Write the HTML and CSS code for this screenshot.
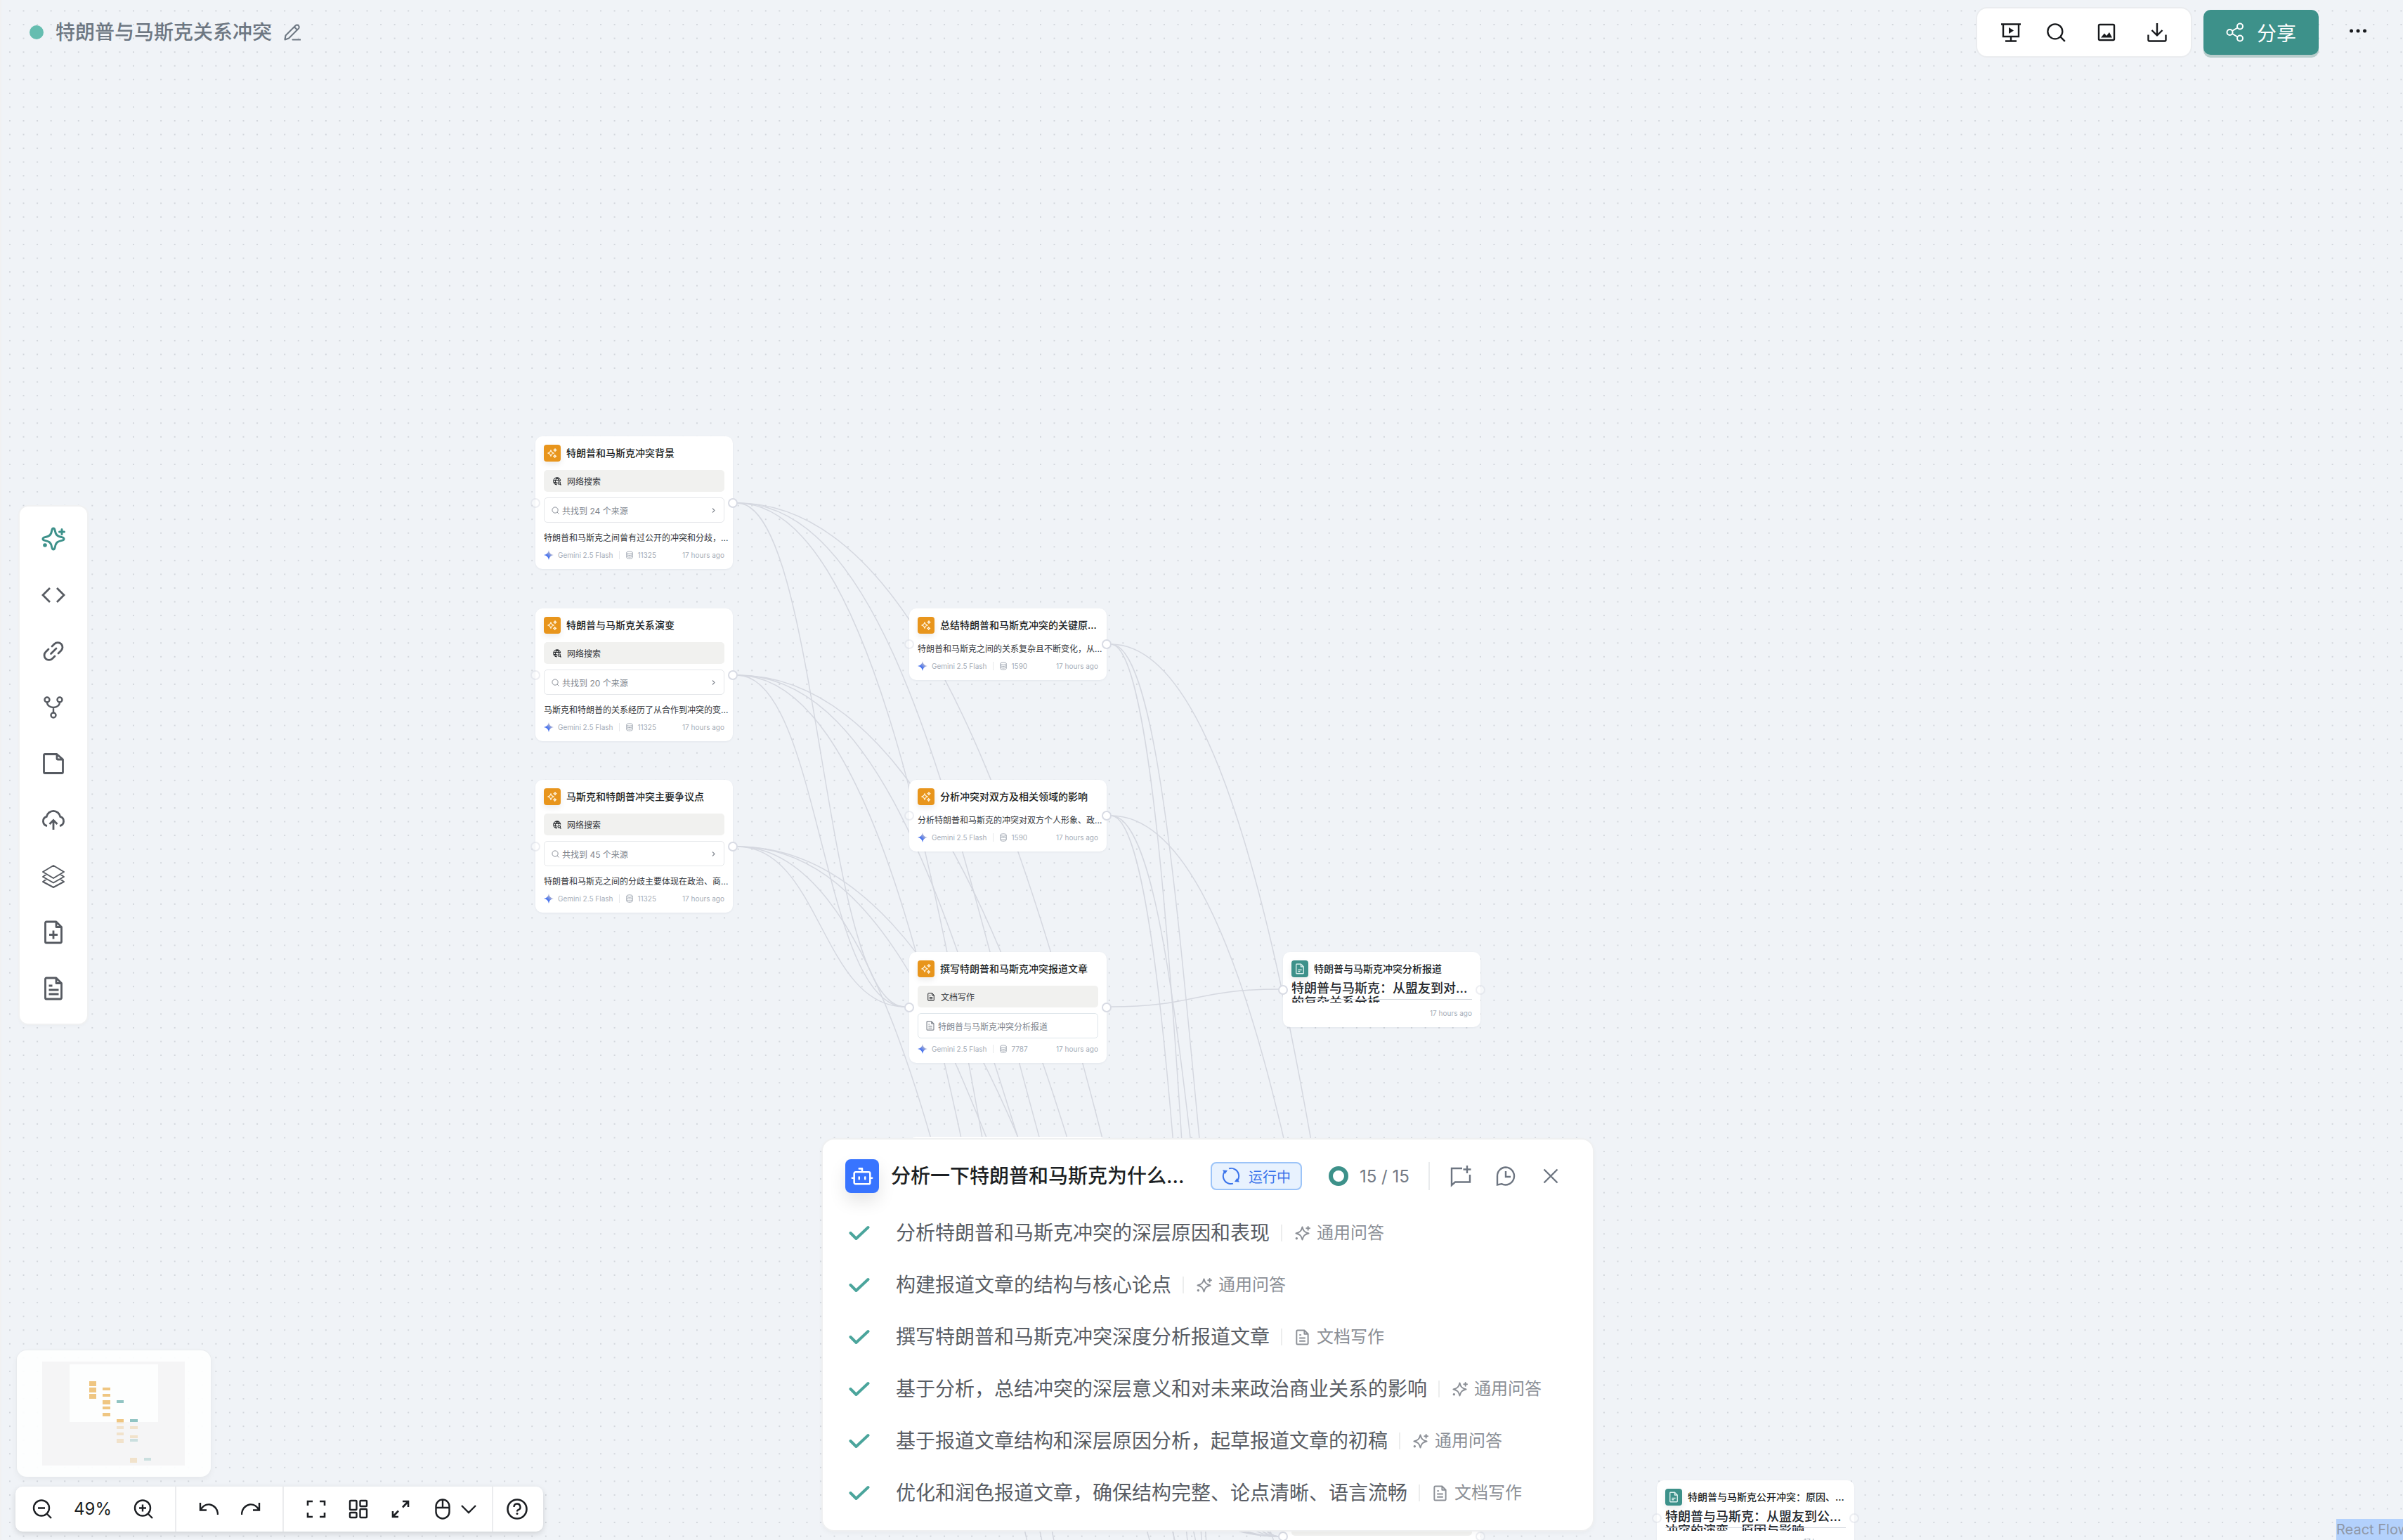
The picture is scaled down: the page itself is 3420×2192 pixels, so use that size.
FILE: index.html
```html
<!DOCTYPE html>
<html lang="zh-CN">
<head>
<meta charset="utf-8">
<title>特朗普与马斯克关系冲突</title>
<link rel="stylesheet" href="styles.css">
</head>
<body>
<svg class="sprite" aria-hidden="true">
  <defs>
    <linearGradient id="gem" x1="0" y1="1" x2="1" y2="0">
      <stop offset="0.35" stop-color="#3f6df0"/><stop offset="0.6" stop-color="#8ea0dc"/><stop offset="0.8" stop-color="#e3d3cf"/>
    </linearGradient>
  </defs>
  <symbol id="i-gemini" viewBox="0 0 24 24"><path fill="url(#gem)" d="M12 0c1 7 5 11 12 12-7 1-11 5-12 12C11 17 7 13 0 12 7 11 11 7 12 0z"/></symbol>
  <symbol id="i-stars" viewBox="0 0 24 24"><g fill="none" stroke="currentColor" stroke-width="1.8" stroke-linejoin="round"><path d="M9 5.500c.9 4.200 2.300 5.600 6.500 6.500-4.200.9-5.600 2.300-6.500 6.500C8.100 14.300 6.700 12.900 2.500 12 6.700 11.100 8.100 9.700 9 5.500z"/><path d="M18 2.500c.4 2 1 2.600 3 3-2 .4-2.600 1-3 3-.4-2-1-2.600-3-3 2-.4 2.600-1 3-3zM17.500 15.500c.4 2 1 2.600 3 3-2 .4-2.600 1-3 3-.4-2-1-2.600-3-3 2-.4 2.600-1 3-3z"/></g></symbol>
  <symbol id="i-spark" viewBox="0 0 24 24"><path fill="none" stroke="currentColor" stroke-width="2" stroke-linejoin="round" d="M12 2.500c1.500 6 3.500 8 9.500 9.500-6 1.500-8 3.500-9.500 9.500-1.500-6-3.500-8-9.500-9.500C8.500 10.500 10.500 8.500 12 2.500z"/><path stroke="currentColor" stroke-width="2" stroke-linecap="round" d="M20.500 2v5M18 4.500h5"/><circle cx="3.500" cy="19.500" r="1.800" fill="currentColor"/></symbol>
  <symbol id="i-globe" viewBox="0 0 24 24"><g fill="none" stroke="currentColor" stroke-width="2.200"><path d="M21.500 11A10 10 0 1 0 11 21.800M2 9h19M2 15h9M12 2C6 8 6 16 10.500 21.500M12 2c3 3 4 6 4 9"/><circle cx="17.500" cy="17" r="3.500"/><path d="M20 20l3 3"/></g></symbol>
  <symbol id="i-search" viewBox="0 0 24 24"><circle cx="11" cy="11" r="9" fill="none" stroke="currentColor" stroke-width="2"/><path stroke="currentColor" stroke-width="2" d="M17.500 17.500L23 23"/></symbol>
  <symbol id="i-right" viewBox="0 0 24 24"><path fill="none" stroke="currentColor" stroke-width="3" d="M8 4l8 8-8 8"/></symbol>
  <symbol id="i-db" viewBox="0 0 20 24"><g fill="none" stroke="currentColor" stroke-width="2"><ellipse cx="10" cy="5" rx="8.500" ry="3.500"/><path d="M1.500 5v14c0 2 4 3.500 8.500 3.500s8.500-1.500 8.500-3.500V5M1.500 10c0 2 4 3 8.500 3s8.500-1 8.500-3M1.500 15c0 2 4 3 8.500 3s8.500-1 8.500-3"/></g></symbol>
  <symbol id="i-doc" viewBox="0 0 24 24"><g fill="none" stroke="currentColor" stroke-width="2" stroke-linejoin="round"><path d="M15 1.500H5A1.500 1.500 0 0 0 3.500 3v18A1.500 1.500 0 0 0 5 22.500h14a1.500 1.500 0 0 0 1.500-1.500V7zM15 1.500V7h5.500M7.500 8.500h3M7.500 13h9M7.500 17.500h9"/></g></symbol>
  <symbol id="i-page" viewBox="0 0 24 24"><g fill="none" stroke="currentColor" stroke-width="1.800" stroke-linejoin="round"><path d="M14 3H6a1 1 0 0 0-1 1v16a1 1 0 0 0 1 1h12a1 1 0 0 0 1-1V8zM14 3v5h5M8.500 14h7M8.500 17h4"/></g></symbol>
  <symbol id="i-check" viewBox="0 0 30 22"><path fill="none" stroke="currentColor" stroke-width="4" stroke-linecap="round" stroke-linejoin="round" d="M2.500 11l8 8L27.500 3"/></symbol>
</svg>

<main class="app">
  <svg class="grid" aria-hidden="true">
    <defs><pattern id="dots" x="4.200" y="5.700" width="19.560" height="19.560" patternUnits="userSpaceOnUse"><circle cx="9.780" cy="9.780" r="0.700" fill="#a3a8b0"/></pattern></defs>
    <rect width="100%" height="100%" fill="url(#dots)"/>
  </svg>

  <section class="canvas" aria-label="画布">
    <svg class="edges" aria-hidden="true">
      <path d="M1049 716C1168 716 1169 1433 1288 1433"/>
      <path d="M1049 716C1435 716 1434 2187 1820 2187"/>
      <path d="M1049 716C1435 716 1434 2939 1820 2939"/>
      <path d="M1049 716C1700 716 1700 3656 2352 3656"/>
      <path d="M1049 961C1168 961 1169 1433 1288 1433"/>
      <path d="M1049 961C1435 961 1434 2187 1820 2187"/>
      <path d="M1049 961C1435 961 1434 2939 1820 2939"/>
      <path d="M1049 961C1700 961 1700 3656 2352 3656"/>
      <path d="M1049 1205C1168 1205 1169 1433 1288 1433"/>
      <path d="M1049 1205C1435 1205 1434 2187 1820 2187"/>
      <path d="M1049 1205C1435 1205 1434 2939 1820 2939"/>
      <path d="M1049 1205C1700 1205 1700 3656 2352 3656"/>
      <path d="M1581 917C1700 917 1701 2187 1820 2187"/>
      <path d="M1581 917C1700 917 1701 2939 1820 2939"/>
      <path d="M1581 917C1967 917 1966 3656 2352 3656"/>
      <path d="M1581 1161C1700 1161 1701 2187 1820 2187"/>
      <path d="M1581 1161C1700 1161 1701 2939 1820 2939"/>
      <path d="M1581 1161C1967 1161 1966 3656 2352 3656"/>
      <path d="M1581 1433C1700 1433 1701 1408 1820 1408"/>
      <path d="M1581 1668C1700 1668 1701 2187 1820 2187"/>
      <path d="M1581 1668C1700 1668 1701 2939 1820 2939"/>
      <path d="M1581 1913C1700 1913 1701 2187 1820 2187"/>
      <path d="M1581 1913C1700 1913 1701 2939 1820 2939"/>
      <path d="M1581 1913C1967 1913 1966 3656 2352 3656"/>
    </svg>

    <article class="node" style="left:762px;top:621px">
      <span class="port port-in faint"></span><span class="port port-out"></span>
      <header><span class="badge orange"><svg><use href="#i-stars"/></svg></span><h3>特朗普和马斯克冲突背景</h3></header>
      <div class="skill"><svg><use href="#i-globe"/></svg><span>网络搜索</span></div>
      <button class="source"><svg><use href="#i-search"/></svg><span>共找到 24 个来源</span><svg class="end"><use href="#i-right"/></svg></button>
      <p>特朗普和马斯克之间曾有过公开的冲突和分歧，...</p>
      <footer><svg class="gem"><use href="#i-gemini"/></svg><span>Gemini 2.5 Flash</span><i></i><svg><use href="#i-db"/></svg><span>11325</span><time>17 hours ago</time></footer>
    </article>

    <article class="node" style="left:762px;top:866px">
      <span class="port port-in faint"></span><span class="port port-out"></span>
      <header><span class="badge orange"><svg><use href="#i-stars"/></svg></span><h3>特朗普与马斯克关系演变</h3></header>
      <div class="skill"><svg><use href="#i-globe"/></svg><span>网络搜索</span></div>
      <button class="source"><svg><use href="#i-search"/></svg><span>共找到 20 个来源</span><svg class="end"><use href="#i-right"/></svg></button>
      <p>马斯克和特朗普的关系经历了从合作到冲突的变...</p>
      <footer><svg class="gem"><use href="#i-gemini"/></svg><span>Gemini 2.5 Flash</span><i></i><svg><use href="#i-db"/></svg><span>11325</span><time>17 hours ago</time></footer>
    </article>

    <article class="node" style="left:762px;top:1110px">
      <span class="port port-in faint"></span><span class="port port-out"></span>
      <header><span class="badge orange"><svg><use href="#i-stars"/></svg></span><h3>马斯克和特朗普冲突主要争议点</h3></header>
      <div class="skill"><svg><use href="#i-globe"/></svg><span>网络搜索</span></div>
      <button class="source"><svg><use href="#i-search"/></svg><span>共找到 45 个来源</span><svg class="end"><use href="#i-right"/></svg></button>
      <p>特朗普和马斯克之间的分歧主要体现在政治、商...</p>
      <footer><svg class="gem"><use href="#i-gemini"/></svg><span>Gemini 2.5 Flash</span><i></i><svg><use href="#i-db"/></svg><span>11325</span><time>17 hours ago</time></footer>
    </article>

    <article class="node" style="left:1294px;top:866px">
      <span class="port port-in faint"></span><span class="port port-out"></span>
      <header><span class="badge orange"><svg><use href="#i-stars"/></svg></span><h3>总结特朗普和马斯克冲突的关键原...</h3></header>
      <p>特朗普和马斯克之间的关系复杂且不断变化，从...</p>
      <footer><svg class="gem"><use href="#i-gemini"/></svg><span>Gemini 2.5 Flash</span><i></i><svg><use href="#i-db"/></svg><span>1590</span><time>17 hours ago</time></footer>
    </article>

    <article class="node" style="left:1294px;top:1110px">
      <span class="port port-in faint"></span><span class="port port-out"></span>
      <header><span class="badge orange"><svg><use href="#i-stars"/></svg></span><h3>分析冲突对双方及相关领域的影响</h3></header>
      <p>分析特朗普和马斯克的冲突对双方个人形象、政...</p>
      <footer><svg class="gem"><use href="#i-gemini"/></svg><span>Gemini 2.5 Flash</span><i></i><svg><use href="#i-db"/></svg><span>1590</span><time>17 hours ago</time></footer>
    </article>

    <article class="node" style="left:1294px;top:1355px">
      <span class="port port-in"></span><span class="port port-out"></span>
      <header><span class="badge orange"><svg><use href="#i-stars"/></svg></span><h3>撰写特朗普和马斯克冲突报道文章</h3></header>
      <div class="skill"><svg><use href="#i-doc"/></svg><span>文档写作</span></div>
      <button class="source doc-link"><svg><use href="#i-doc"/></svg><span>特朗普与马斯克冲突分析报道</span></button>
      <footer><svg class="gem"><use href="#i-gemini"/></svg><span>Gemini 2.5 Flash</span><i></i><svg><use href="#i-db"/></svg><span>7787</span><time>17 hours ago</time></footer>
    </article>

    <article class="node stub" style="left:1294px;top:1618px"></article>

    <article class="node" style="left:1826px;top:1355px">
      <span class="port port-in"></span><span class="port port-out faint"></span>
      <header><span class="badge teal"><svg><use href="#i-page"/></svg></span><h3>特朗普与马斯克冲突分析报道</h3></header>
      <div class="excerpt"><h4>特朗普与马斯克：从盟友到对...<br>的复杂关系分析</h4></div>
      <footer><time>17 hours ago</time></footer>
    </article>

    <article class="node stub" style="left:1826px;top:2107px">
      <span class="port port-in"></span><span class="port port-out faint"></span>
      <div class="skill"></div>
    </article>

    <article class="node" style="left:2358px;top:2107px">
      <span class="port port-in faint"></span><span class="port port-out faint"></span>
      <header><span class="badge teal"><svg><use href="#i-page"/></svg></span><h3>特朗普与马斯克公开冲突：原因、...</h3></header>
      <div class="excerpt"><h4>特朗普与马斯克：从盟友到公...<br>冲突的演变、原因与影响</h4></div>
      <footer><time>17 hours ago</time></footer>
    </article>
  </section>

  <header class="topbar">
    <div class="doc-title">
      <span class="status"></span>
      <h1>特朗普与马斯克关系冲突</h1>
      <button aria-label="重命名"><svg width="24" height="24" viewBox="0 0 24 24"><g fill="none" stroke="currentColor" stroke-width="2" stroke-linejoin="round" stroke-linecap="round"><path d="M1.500 22.500l1-6L16.500 2.500a3 3 0 0 1 4.300 0 3 3 0 0 1 0 4.300L7 20.500zM15 4.500L19 8.500M12.500 22.500h11"/></g></svg></button>
    </div>
    <div class="actions">
      <div class="action-group">
        <button aria-label="演示"><svg width="28" height="28" viewBox="0 0 28 28"><g fill="none" stroke="currentColor" stroke-width="2.400"><path d="M0 2.500h28M3 2.500v17.500h22V2.500M14 20v6M6 26.500h16"/></g><path fill="currentColor" d="M11 7v9l7-4.500z"/></svg></button>
        <button aria-label="搜索"><svg width="28" height="28"><use href="#i-search"/></svg></button>
        <button class="spaced" aria-label="图片"><svg width="28" height="28" viewBox="0 0 28 28"><rect x="3" y="3" width="22" height="22" rx="1.500" fill="none" stroke="currentColor" stroke-width="2.400"/><path fill="currentColor" d="M6 21.500l5-6 3 3.500 4-5 4 7.500z"/></svg></button>
        <button class="spaced" aria-label="下载"><svg width="28" height="28" viewBox="0 0 28 28"><path fill="none" stroke="currentColor" stroke-width="2.400" stroke-linejoin="round" d="M14 1v17M6.500 11l7.500 7.500 7.500-7.500M1.500 17.500V25a1.500 1.500 0 0 0 1.500 1.500h22a1.500 1.500 0 0 0 1.500-1.500v-7.500"/></svg></button>
      </div>
      <button class="share"><svg width="26" height="28" viewBox="0 0 26 28"><g fill="none" stroke="currentColor" stroke-width="2"><circle cx="5.500" cy="14" r="4"/><circle cx="20" cy="5.500" r="4"/><circle cx="20" cy="22.500" r="4"/><path d="M9 12l7.500-4.500M9 16l7.500 4.500"/></g></svg><span>分享</span></button>
      <button class="more" aria-label="更多"><svg width="26" height="8" viewBox="0 0 26 8"><g fill="currentColor"><circle cx="3.500" cy="4" r="2.500"/><circle cx="13" cy="4" r="2.500"/><circle cx="22.500" cy="4" r="2.500"/></g></svg></button>
    </div>
  </header>

  <nav class="tools" aria-label="工具">
    <button class="active" aria-label="提问"><svg viewBox="0 0 36 36"><path fill="none" stroke="currentColor" stroke-width="3" stroke-linejoin="round" d="M18 3c1.300 0 1.800 1 2.200 3 1 6.300 3 8.200 9.800 9.600 2 .4 3 1 3 2.400s-1 2-3 2.400c-6.800 1.400-8.800 3.300-9.800 9.600-.4 2-.9 3-2.200 3s-1.800-1-2.200-3c-1-6.300-3-8.200-9.800-9.600-2-.4-3-1-3-2.400s1-2 3-2.400c6.800-1.400 8.800-3.300 9.800-9.600.4-2 .9-3 2.200-3z"/><path stroke="currentColor" stroke-width="3" stroke-linecap="round" d="M30 4.500v7M26.500 8h7"/><circle cx="6" cy="27" r="2.800" fill="currentColor"/></svg></button>
    <button aria-label="代码"><svg viewBox="0 0 36 36"><path fill="none" stroke="currentColor" stroke-width="2.800" d="M13 8L3 18l10 10M23 8l10 10-10 10"/></svg></button>
    <button aria-label="链接"><svg viewBox="0 0 36 36"><g fill="none" stroke="currentColor" stroke-width="2.800" stroke-linecap="round"><path d="M14.500 21.500l7.500-7.500M16 11l3.500-3.500a6.700 6.700 0 0 1 9.500 9.500L25 21M11 15l-4 4a6.700 6.700 0 0 0 9.500 9.500L20 25"/></g></svg></button>
    <button aria-label="分支"><svg viewBox="0 0 36 36"><g fill="none" stroke="currentColor" stroke-width="2.400"><circle cx="9" cy="7" r="3.500"/><circle cx="27" cy="7" r="3.500"/><circle cx="18" cy="29" r="3.500"/><path d="M9 10.500c0 4.500 4 7.500 9 7.500s9-3 9-7.500M18 18v7.500"/></g></svg></button>
    <button aria-label="便签"><svg viewBox="0 0 36 36"><g fill="none" stroke="currentColor" stroke-width="2.800" stroke-linejoin="round"><path d="M23 4.500H6A1.500 1.500 0 0 0 4.500 6v24A1.500 1.500 0 0 0 6 31.500h24a1.500 1.500 0 0 0 1.500-1.500V12zM23 4.500V11a1 1 0 0 0 1 1h7.500"/></g></svg></button>
    <button aria-label="上传"><svg viewBox="0 0 36 36"><g fill="none" stroke="currentColor" stroke-width="2.800"><path d="M9 26.500a6.800 6.800 0 0 1-.7-13.200 9.900 9.900 0 0 1 19.400 0 6.800 6.800 0 0 1-.7 13.200M18 32V19.500M12.500 24l5.500-5.500 5.500 5.500"/></g></svg></button>
    <button aria-label="图层"><svg viewBox="0 0 36 36"><g fill="none" stroke="currentColor" stroke-width="2" stroke-linejoin="round"><path d="M18 3l15 9-15 9-15-9zM8 15.500l-5 3.500 15 8.500L33 19l-5-3.500M8 22.500L3 26l15 8 15-8-5-3.500"/></g></svg></button>
    <button aria-label="新建文档"><svg viewBox="0 0 36 36"><g fill="none" stroke="currentColor" stroke-width="2.800" stroke-linejoin="round"><path d="M22 3H8a1.500 1.500 0 0 0-1.500 1.500v27A1.500 1.500 0 0 0 8 33h20a1.500 1.500 0 0 0 1.500-1.500V10.500zM22 3v7.500h7.500M12 21.500h12M18 15.500v12"/></g></svg></button>
    <button aria-label="导入资料"><svg viewBox="0 0 36 36"><g fill="none" stroke="currentColor" stroke-width="2.800" stroke-linejoin="round"><path d="M22 3H8a1.500 1.500 0 0 0-1.500 1.500v27A1.500 1.500 0 0 0 8 33h20a1.500 1.500 0 0 0 1.500-1.500V10.500zM22 3v7.500h7.500M11.500 14h5M11.500 20h14M11.500 26h14"/></g></svg></button>
  </nav>

  <div class="corner">
    <div class="minimap">
      <svg viewBox="60 1938 203 148" width="203" height="148">
        <rect x="60" y="1938" width="203" height="148" fill="#f5f5f6"/>
        <rect x="99" y="1942" width="126" height="82" fill="#fdfefe"/>
        <g fill="#efc682"><rect x="127" y="1966" width="10" height="7"/><rect x="127" y="1975" width="10" height="7"/><rect x="127" y="1984" width="10" height="7"/><rect x="146" y="1975" width="11" height="4"/><rect x="146" y="1984" width="11" height="4"/><rect x="146" y="1993" width="11" height="6"/><rect x="146" y="2002" width="11" height="4"/><rect x="146" y="2011" width="11" height="5"/><rect x="166" y="2020" width="10" height="4"/></g>
        <g fill="#91c4c3"><rect x="166" y="1993" width="10" height="4"/><rect x="185" y="2020" width="11" height="4"/></g>
        <g fill="#f1e2cb"><rect x="166" y="2024" width="10" height="2"/><rect x="166" y="2030" width="10" height="4"/><rect x="166" y="2039" width="10" height="4"/><rect x="166" y="2048" width="10" height="6"/><rect x="185" y="2030" width="11" height="4"/><rect x="185" y="2043" width="11" height="4"/><rect x="185" y="2075" width="10" height="7"/></g>
        <g fill="#cbdfdf"><rect x="185" y="2048" width="11" height="4"/><rect x="205" y="2075" width="10" height="4"/></g>
      </svg>
    </div>
    <div class="controls">
      <div class="group first">
        <button aria-label="缩小"><svg width="28" height="28" viewBox="0 0 28 28"><g fill="none" stroke="currentColor" stroke-width="2.400"><circle cx="13" cy="12.500" r="11"/><path d="M20.500 20.500l6.500 6.500M8 12.500h10"/></g></svg></button>
        <output>49%</output>
        <button aria-label="放大"><svg width="28" height="28" viewBox="0 0 28 28"><g fill="none" stroke="currentColor" stroke-width="2.400"><circle cx="13" cy="12.500" r="11"/><path d="M20.500 20.500l6.500 6.500M8 12.500h10M13 7.500v10"/></g></svg></button>
      </div>
      <div class="group">
        <button aria-label="撤销"><svg width="28" height="28" viewBox="0 0 28 28"><path fill="none" stroke="currentColor" stroke-width="2.400" d="M2 5v10.500h9M2.500 15C6 9 11 7 15.500 7.500 22 8.500 27 14 27 22"/></svg></button>
        <button aria-label="重做"><svg width="28" height="28" viewBox="0 0 28 28"><path fill="none" stroke="currentColor" stroke-width="2.400" d="M26 5v10.500h-9M25.500 15C22 9 17 7 12.500 7.500 6 8.500 1 14 1 22"/></svg></button>
      </div>
      <div class="group">
        <button aria-label="适应视图"><svg width="28" height="28" viewBox="0 0 28 28"><path fill="none" stroke="currentColor" stroke-width="2.600" d="M2 9V3h7M19 3h7v6M26 19v6h-7M9 25H2v-6"/></svg></button>
        <button aria-label="自动布局"><svg width="28" height="28" viewBox="0 0 28 28"><g fill="none" stroke="currentColor" stroke-width="2.400"><rect x="2" y="2" width="9.500" height="13" rx="1"/><rect x="16.500" y="2" width="9.500" height="8" rx="1"/><rect x="16.500" y="14" width="9.500" height="12" rx="1"/><rect x="2" y="19" width="9.500" height="7" rx="1"/></g></svg></button>
        <button aria-label="全屏"><svg width="28" height="28" viewBox="0 0 28 28"><path fill="none" stroke="currentColor" stroke-width="2.600" d="M17 3h8v8M25 3l-8 8.500M3 17v8h8M3 25l8-8.500"/></svg></button>
        <button class="mode" aria-label="鼠标模式"><svg width="24" height="30" viewBox="0 0 24 30"><path fill="none" stroke="currentColor" stroke-width="2.400" d="M12 1.500a9.500 9.500 0 0 1 9.500 9.500v8a9.500 9.500 0 0 1-19 0v-8A9.500 9.500 0 0 1 12 1.500zM2.500 13h19M12 1.500V13"/></svg><svg width="24" height="24" viewBox="0 0 24 24"><path fill="none" stroke="currentColor" stroke-width="2.400" d="M2 7l10 10L22 7"/></svg></button>
      </div>
      <div class="group last">
        <button aria-label="帮助"><svg width="30" height="30" viewBox="0 0 30 30"><circle cx="15" cy="15" r="13.500" fill="none" stroke="currentColor" stroke-width="2.600"/><path fill="none" stroke="currentColor" stroke-width="2.400" d="M10.500 12a4.500 4.500 0 1 1 6 4.200c-1.200.5-1.500 1-1.500 2.300"/><circle cx="15" cy="21.500" r="1.500" fill="currentColor"/></svg></button>
      </div>
    </div>
  </div>

  <section class="panel">
    <header>
      <span class="bot"><svg width="34" height="34" viewBox="0 0 24 24"><path fill="none" stroke="currentColor" stroke-width="1.800" stroke-linecap="round" stroke-linejoin="round" d="M12 8V4.500H9M5.500 8h13A1.500 1.500 0 0 1 20 9.500v9a1.500 1.500 0 0 1-1.500 1.500h-13A1.500 1.500 0 0 1 4 18.500v-9A1.500 1.500 0 0 1 5.500 8zM2 14h2M20 14h2M15 13v2M9 13v2"/></svg></span>
      <h2>分析一下特朗普和马斯克为什么...</h2>
      <span class="state"><svg width="26" height="26" viewBox="0 0 26 26"><g fill="none" stroke="currentColor" stroke-width="2"><path d="M9.500 23.500A11 11 0 0 1 4 6.500M10 2.400a11 11 0 0 1 12 17M16.500 2.500A11 11 0 0 1 22 19.500M16 23.600a11 11 0 0 1-6.500-.1"/></g><path fill="currentColor" d="M1 4.500l7 .5-3.500 5zM25 21.500l-7-.5 3.500-5z"/></svg><span>运行中</span></span>
      <svg class="ring" width="28" height="28" viewBox="0 0 28 28"><circle cx="14" cy="14" r="11" fill="none" stroke="#3d918a" stroke-width="6"/></svg>
      <span class="count">15 / 15</span>
      <i class="rule"></i>
      <div class="panel-actions">
        <button aria-label="新建会话"><svg width="32" height="32" viewBox="0 0 32 32"><path fill="none" stroke="currentColor" stroke-width="2.400" d="M18 5H3v24l5-4.500h21V14M25 1v11M19.500 6.500h11"/></svg></button>
        <button aria-label="历史"><svg width="32" height="32" viewBox="0 0 32 32"><path fill="none" stroke="currentColor" stroke-width="2.400" d="M16 3.500A12.500 12.500 0 1 1 10 27.200l-6 1.300V16A12.200 12.200 0 0 1 16 3.500zM16 9v8h7"/></svg></button>
        <button aria-label="关闭"><svg width="32" height="32" viewBox="0 0 32 32"><path fill="none" stroke="currentColor" stroke-width="2.400" d="M6.500 6.500l19 19M25.500 6.500l-19 19"/></svg></button>
      </div>
    </header>
    <ul>
      <li><svg class="done"><use href="#i-check"/></svg><span>分析特朗普和马斯克冲突的深层原因和表现</span><em><svg><use href="#i-spark"/></svg>通用问答</em></li>
      <li><svg class="done"><use href="#i-check"/></svg><span>构建报道文章的结构与核心论点</span><em><svg><use href="#i-spark"/></svg>通用问答</em></li>
      <li><svg class="done"><use href="#i-check"/></svg><span>撰写特朗普和马斯克冲突深度分析报道文章</span><em><svg><use href="#i-doc"/></svg>文档写作</em></li>
      <li><svg class="done"><use href="#i-check"/></svg><span>基于分析，总结冲突的深层意义和对未来政治商业关系的影响</span><em><svg><use href="#i-spark"/></svg>通用问答</em></li>
      <li><svg class="done"><use href="#i-check"/></svg><span>基于报道文章结构和深层原因分析，起草报道文章的初稿</span><em><svg><use href="#i-spark"/></svg>通用问答</em></li>
      <li><svg class="done"><use href="#i-check"/></svg><span>优化和润色报道文章，确保结构完整、论点清晰、语言流畅</span><em><svg><use href="#i-doc"/></svg>文档写作</em></li>
    </ul>
  </section>

  <a class="attribution" href="#">React Flow</a>
</main>
</body>
</html>
```
FILE: styles.css
```css
* { box-sizing: border-box; }

body {
  margin: 0;
  font-family: Inter, "Noto Sans CJK SC", sans-serif;
  color: #1c1f23;
}

h1, h2, h3, h4, p, ul { margin: 0; padding: 0; }

button {
  display: flex;
  align-items: center;
  justify-content: center;
  padding: 0;
  border: 0;
  background: none;
  color: inherit;
  font: inherit;
}

.sprite { position: absolute; width: 0; height: 0; }

.app {
  position: relative;
  height: 100vh;
  overflow: hidden;
  background: #f0f3f7;
  border-left: 2px solid #f1f1f2;
}

.grid {
  position: absolute;
  top: 0;
  left: -2px;
  width: calc(100% + 2px);
  height: 100%;
}

/* canvas */
.canvas { position: absolute; top: 0; bottom: 0; right: 0; left: -2px; overflow: hidden; }

.edges {
  position: absolute;
  inset: 0;
  width: 100%;
  height: 100%;
  fill: none;
  stroke: #d5d8e0;
  stroke-width: 1.5px;
}

.node {
  position: absolute;
  width: 281px;
  padding: 12px 12px 13px;
  border-radius: 10px;
  background: #fff;
  box-shadow: 0 1px 3px rgba(20, 40, 60, 0.06);
}

.port {
  position: absolute;
  top: 50%;
  width: 14px;
  height: 14px;
  margin-top: -7px;
  border: 2px solid #d8dbe4;
  border-radius: 50%;
  background: #fff;
}
.port-in { left: -7px; }
.port-out { right: -7px; }
.faint { opacity: 0.45; }

.node header { display: flex; align-items: center; gap: 8px; height: 24px; }

.badge {
  display: flex;
  flex: none;
  align-items: center;
  justify-content: center;
  width: 24px;
  height: 24px;
  border-radius: 4px;
  box-shadow: 0 4px 8px rgba(0, 0, 0, 0.08);
}
.badge svg { width: 16px; height: 16px; }
.orange { background: #e8951c; color: #fff3dc; }
.teal { background: #3d918a; color: #dff1ef; }
.teal svg { width: 18px; height: 18px; }

.node h3 { font-size: 14px; line-height: 24px; font-weight: 500; white-space: nowrap; }

.skill {
  display: flex;
  align-items: center;
  gap: 8px;
  height: 31px;
  margin-top: 12px;
  padding-left: 13px;
  border-radius: 5px;
  background: #f1f1ef;
  font-size: 12px;
  color: #34373c;
}
.skill svg { width: 12px; height: 12px; color: #1c1f23; }

.source {
  justify-content: flex-start;
  gap: 4px;
  width: 100%;
  height: 36px;
  margin-top: 8px;
  padding: 0 10px;
  border: 1px solid #e5e7ea;
  border-radius: 5px;
  font-size: 12px;
  color: #80868f;
}
.source svg { width: 11px; height: 11px; }
.source .end { width: 9px; height: 9px; margin-left: auto; }
.doc-link { border-color: #dde5ea; }
.doc-link svg { width: 14px; height: 14px; }

.node p {
  margin-top: 12px;
  margin-bottom: 7px;
  font-size: 12px;
  line-height: 20px;
  color: #34373c;
  white-space: nowrap;
}

.node footer {
  display: flex;
  align-items: center;
  gap: 6px;
  height: 14px;
  font-size: 10px;
  line-height: 14px;
  color: #a6adb7;
}
.node footer svg { width: 10px; height: 12px; }
.node footer .gem { width: 14px; height: 14px; }
.node footer i { width: 1px; height: 12px; margin: 0 3px; background: #e6e8eb; }
.node footer time { margin-left: auto; }
.source + footer { margin-top: 8px; }

.excerpt {
  position: relative;
  height: 30px;
  margin: 6px 0 8px;
  overflow: hidden;
}
.excerpt::after {
  content: "";
  position: absolute;
  top: 25px;
  left: 0;
  right: 0;
  height: 1px;
  background: #d3d8de;
}
.excerpt h4 { font-size: 18px; line-height: 20px; font-weight: 500; color: #24272c; white-space: nowrap; }

.stub { height: 159px; }
.stub .skill { margin-top: 36px; }

/* top bar */
.topbar {
  position: absolute;
  top: 12px;
  left: 40px;
  right: 32px;
  display: flex;
  align-items: center;
  justify-content: space-between;
}
.doc-title { display: flex; align-items: center; gap: 17px; color: #6d7782; }
.doc-title h1 { font-size: 28px; line-height: 40px; font-weight: 500; }
.status { width: 20px; height: 20px; border-radius: 50%; background: #65bdb0; }

.actions { display: flex; align-items: center; color: #17191c; }
.action-group {
  display: flex;
  height: 68px;
  padding: 0 16px;
  border-radius: 14px;
  background: #fff;
  box-shadow: 0 0 0 2px #eaecef;
}
.action-group button { width: 64px; }
.action-group .spaced { margin-left: 8px; }
.share {
  gap: 18px;
  width: 164px;
  height: 64px;
  margin-left: 18px;
  border-radius: 10px;
  background: #3d918a;
  box-shadow: 0 4px 0 #b8cdcc;
  color: #fff;
  font-size: 28px;
}
.more { width: 64px; height: 64px; margin: 0 0 4px 24px; }

/* left tools */
.tools {
  position: absolute;
  top: 0;
  bottom: 14px;
  left: 26px;
  width: 96px;
  height: fit-content;
  margin-block: auto;
  padding: 6px 0 10px;
  border-radius: 12px;
  background: #fff;
  box-shadow: 0 0 0 2px #f0f1f2, 0 2px 6px rgba(0, 0, 0, 0.04);
  color: #565a61;
}
.tools button { width: 100%; height: 80px; }
.tools svg { width: 36px; height: 36px; }
.tools .active { color: #3d918a; }

/* minimap and zoom controls */
.corner {
  position: absolute;
  left: 20px;
  bottom: 12px;
  display: flex;
  flex-direction: column;
  align-items: flex-start;
  gap: 14px;
}
.minimap {
  display: flex;
  margin-left: 2px;
  padding: 16px 37px 16px 36px;
  border-radius: 14px;
  background: rgba(253, 254, 254, 0.94);
  box-shadow: 0 0 0 1px #e8ebee, 0 4px 10px rgba(0, 0, 0, 0.05);
}
.controls {
  display: flex;
  height: 64px;
  border-radius: 10px;
  background: #fff;
  box-shadow: 0 3px 8px rgba(0, 0, 0, 0.14);
}
.group {
  display: flex;
  align-items: center;
  gap: 12px;
  padding: 0 21px 0 22px;
  border-right: 2px solid #ebecee;
}
.group button { width: 48px; height: 48px; }
.first { gap: 0; padding-left: 14px; }
.group output { width: 96px; text-align: center; font-size: 24px; line-height: 32px; }
.group:nth-child(3) { padding-right: 10px; }
.group .mode { gap: 13px; width: 84px; }
.controls .last { padding: 0 13px 0 10px; border: 0; }

/* agent panel */
.panel {
  position: absolute;
  left: 16px;
  right: 0;
  bottom: 14px;
  width: 1096px;
  margin-inline: auto;
  padding: 28px 36px 16px 32px;
  border-radius: 16px;
  background: #fff;
  box-shadow: 0 0 0 2px #eff0f1, 0 3px 8px rgba(0, 0, 0, 0.05);
}
.panel header { display: flex; align-items: center; height: 48px; margin-bottom: 20px; }
.bot {
  display: flex;
  align-items: center;
  justify-content: center;
  width: 48px;
  height: 48px;
  border-radius: 8px;
  background: #3874ff;
  color: #fff;
  box-shadow: 0 12px 24px rgba(0, 0, 0, 0.1);
}
.panel h2 {
  flex: 1;
  margin-left: 17px;
  font-size: 28px;
  line-height: 40px;
  font-weight: 500;
  white-space: nowrap;
}
.state {
  display: flex;
  align-items: center;
  justify-content: center;
  gap: 12px;
  width: 130px;
  height: 40px;
  border: 2px solid #9cc4f8;
  border-radius: 8px;
  background: #e8f2fe;
  color: #3a73ea;
  font-size: 20px;
}
.ring { margin-left: 38px; }
.count { width: 73px; margin-left: 16px; font-size: 24px; color: #737a85; white-space: nowrap; }
.rule { width: 2px; height: 40px; margin: 0 20px 0 25px; background: #e9ebed; }
.panel-actions { display: flex; gap: 16px; color: #6d7581; }
.panel-actions button { width: 48px; height: 48px; }

.panel ul { list-style: none; }
.panel li { display: flex; align-items: center; height: 74px; font-size: 28px; line-height: 40px; color: #595d64; white-space: nowrap; }
.done { width: 30px; height: 22px; margin: 0 37px 0 5px; color: #4ba59c; }
.panel em {
  display: flex;
  align-items: center;
  gap: 9px;
  height: 24px;
  margin-left: 16px;
  padding-left: 17px;
  border-left: 2px solid #eceded;
  font-style: normal;
  font-size: 24px;
  line-height: 24px;
  color: #8b8f96;
}
.panel em svg { width: 23px; height: 23px; }

.attribution {
  position: absolute;
  top: calc(100% - 30px);
  left: calc(100% - 95px);
  height: 30px;
  background: #b3d1fc;
  color: #8f98a8;
  font-size: 20px;
  line-height: 30px;
  text-decoration: none;
  white-space: nowrap;
}
```
